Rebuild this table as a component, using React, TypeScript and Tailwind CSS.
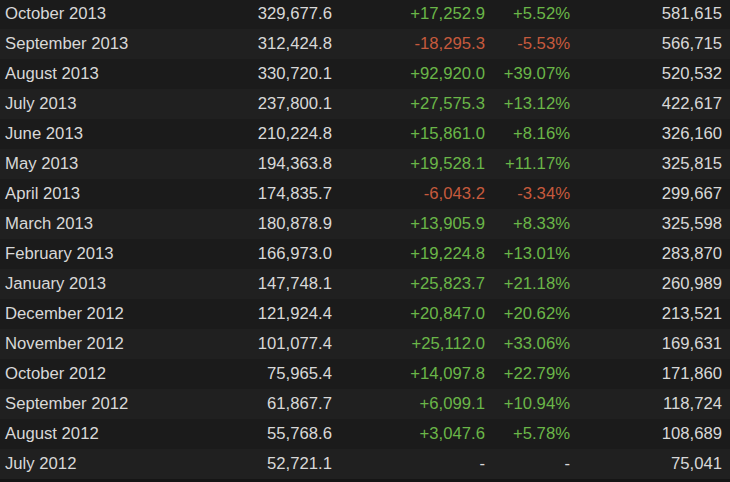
const rows: [string, string, string, string, string][] = [
  ['October 2013', '329,677.6', '+17,252.9', '+5.52%', '581,615'],
  ['September 2013', '312,424.8', '-18,295.3', '-5.53%', '566,715'],
  ['August 2013', '330,720.1', '+92,920.0', '+39.07%', '520,532'],
  ['July 2013', '237,800.1', '+27,575.3', '+13.12%', '422,617'],
  ['June 2013', '210,224.8', '+15,861.0', '+8.16%', '326,160'],
  ['May 2013', '194,363.8', '+19,528.1', '+11.17%', '325,815'],
  ['April 2013', '174,835.7', '-6,043.2', '-3.34%', '299,667'],
  ['March 2013', '180,878.9', '+13,905.9', '+8.33%', '325,598'],
  ['February 2013', '166,973.0', '+19,224.8', '+13.01%', '283,870'],
  ['January 2013', '147,748.1', '+25,823.7', '+21.18%', '260,989'],
  ['December 2012', '121,924.4', '+20,847.0', '+20.62%', '213,521'],
  ['November 2012', '101,077.4', '+25,112.0', '+33.06%', '169,631'],
  ['October 2012', '75,965.4', '+14,097.8', '+22.79%', '171,860'],
  ['September 2012', '61,867.7', '+6,099.1', '+10.94%', '118,724'],
  ['August 2012', '55,768.6', '+3,047.6', '+5.78%', '108,689'],
  ['July 2012', '52,721.1', '-', '-', '75,041'],
];

function changeColor(v: string) {
  if (v.startsWith('+')) return 'text-[#6ab648]';
  if (v.startsWith('-') && v.length > 1) return 'text-[#c65a3d]';
  return 'text-[#d8d8d8]';
}

export default function App() {
  return (
    <div className="w-[730px] h-[482px] overflow-hidden bg-[#151515] font-['Liberation_Sans',Arial,sans-serif] text-[16.7px] text-[#d8d8d8]">
      <div className="mt-[-1px]">
        {rows.map((r, i) => (
          <div
            key={r[0]}
            className={`flex items-center h-[30px] ${i % 2 === 0 ? 'bg-[#1b1b1b]' : 'bg-[#202020]'}`}
          >
            <div className="w-[200px] pl-[5px]">{r[0]}</div>
            <div className="w-[132px] text-right">{r[1]}</div>
            <div className={`w-[153px] text-right ${changeColor(r[2])}`}>{r[2]}</div>
            <div className={`w-[85px] text-right ${changeColor(r[3])}`}>{r[3]}</div>
            <div className="w-[152px] text-right">{r[4]}</div>
          </div>
        ))}
      </div>
    </div>
  );
}
